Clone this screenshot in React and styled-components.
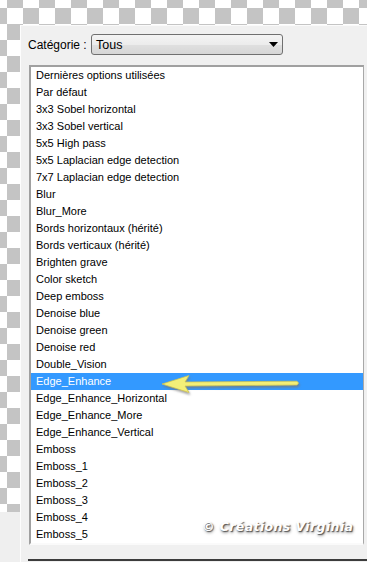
import React from 'react';
import styled, { createGlobalStyle } from 'styled-components';

const GlobalStyle = createGlobalStyle`
  html, body {
    margin: 0;
    padding: 0;
  }
  body {
    width: 367px;
    height: 562px;
    overflow: hidden;
    font-family: "Liberation Sans", Arial, sans-serif;
  }
`;

const Screen = styled.div`
  width: 367px;
  height: 562px;
  display: grid;
  grid-template-columns: 20px 1fr;
  grid-template-rows: 25px 1fr;
  background-color: #fff;
  background-image: conic-gradient(#c4c4c4 25%, transparent 0 50%, #c4c4c4 0 75%, transparent 0);
  background-size: 32px 32px;
  background-position: 7px 8px;
`;

const Side = styled.div`
  grid-column: 1;
  grid-row: 2;
  display: flex;
  flex-direction: column;
  justify-content: flex-end;
`;

const SideFoot = styled.div`
  height: 50px;
  background: #efefef;
`;

const Panel = styled.div`
  grid-column: 2;
  grid-row: 2;
  box-sizing: border-box;
  display: flex;
  flex-direction: column;
  background: #f0f0f0;
  border-top: 1px solid #fafafa;
  border-left: 1px solid #fdfdfd;
  padding: 8px 0 1px 7px;
`;

const Header = styled.div`
  display: flex;
  align-items: center;
  height: 21px;
`;

const Label = styled.span`
  width: 63px;
  font-size: 12px;
  color: #000;
`;

const Select = styled.div`
  box-sizing: border-box;
  width: 192px;
  height: 21px;
  display: flex;
  align-items: center;
  justify-content: space-between;
  padding: 0 4px 0 4px;
  border: 1px solid #707070;
  border-radius: 3px;
  background: linear-gradient(#f4f4f4 0%, #ececec 50%, #e0e0e0 51%, #d6d6d6 100%);
  font-size: 12.5px;
  color: #000;
`;

const List = styled.div`
  position: relative;
  box-sizing: border-box;
  width: 335px;
  height: 480px;
  margin: 10px 0 0 1px;
  background: #fff;
  border-top: 2px solid #a0a0a0;
  border-left: 2px solid #a0a0a0;
  border-right: 1px solid #a8a8a8;
  border-bottom: 2px solid #fafafa;
  overflow: hidden;
`;

const Item = styled.div`
  height: 17px;
  line-height: 17px;
  padding-left: 5px;
  font-size: 11px;
  white-space: nowrap;
  color: ${p => (p.$selected ? '#fff' : '#000')};
  background: ${p => (p.$selected ? '#3399ff' : 'transparent')};
`;

const Pointer = styled.svg`
  position: absolute;
  left: 128px;
  top: 303px;
`;

const Watermark = styled.div`
  position: absolute;
  left: 171px;
  top: 452px;
  font-family: "DejaVu Sans", sans-serif;
  font-size: 12.5px;
  font-weight: bold;
  font-style: italic;
  letter-spacing: 0.4px;
  color: #fff;
  text-shadow: 1px 1px 1px #555, 1px 2px 3px #999;
  white-space: nowrap;
`;

const Spacer = styled.div`
  flex: 1;
`;

const Rule = styled.div`
  height: 2px;
  background: #3c3c3c;
`;

const items = [
  'Dernières options utilisées',
  'Par défaut',
  '3x3 Sobel horizontal',
  '3x3 Sobel vertical',
  '5x5 High pass',
  '5x5 Laplacian edge detection',
  '7x7 Laplacian edge detection',
  'Blur',
  'Blur_More',
  'Bords horizontaux (hérité)',
  'Bords verticaux (hérité)',
  'Brighten grave',
  'Color sketch',
  'Deep emboss',
  'Denoise blue',
  'Denoise green',
  'Denoise red',
  'Double_Vision',
  'Edge_Enhance',
  'Edge_Enhance_Horizontal',
  'Edge_Enhance_More',
  'Edge_Enhance_Vertical',
  'Emboss',
  'Emboss_1',
  'Emboss_2',
  'Emboss_3',
  'Emboss_4',
  'Emboss_5',
];

const Arrow = () => (
  <Pointer width="145" height="28" viewBox="0 0 145 28">
    <defs>
      <filter id="shade" x="-10%" y="-50%" width="120%" height="200%">
        <feDropShadow dx="1" dy="2" stdDeviation="1.2" floodColor="#777" floodOpacity="0.7" />
      </filter>
    </defs>
    <g filter="url(#shade)" fill="#f3ef78" stroke="#cfc24a" strokeWidth="0.7" strokeLinejoin="round">
      <path d="M3 14 L30 5.5 L26 12 L138 11.2 Q141 13 138 15 L26 16 L30 22.5 Z" />
    </g>
  </Pointer>
);

const App = () => {
  return (
    <>
      <GlobalStyle />
      <Screen>
        <Side>
          <SideFoot />
        </Side>
        <Panel>
          <Header>
            <Label>Catégorie :</Label>
            <Select>
              <span>Tous</span>
              <svg width="9" height="5" viewBox="0 0 9 5">
                <path d="M0 0 H9 L4.5 5 Z" fill="#000" />
              </svg>
            </Select>
          </Header>
          <List>
            {items.map(name => (
              <Item key={name} $selected={name === 'Edge_Enhance'}>{name}</Item>
            ))}
            <Arrow />
            <Watermark>© Créations Virginia</Watermark>
          </List>
          <Spacer />
          <Rule />
        </Panel>
      </Screen>
    </>
  );
};

export default App;
